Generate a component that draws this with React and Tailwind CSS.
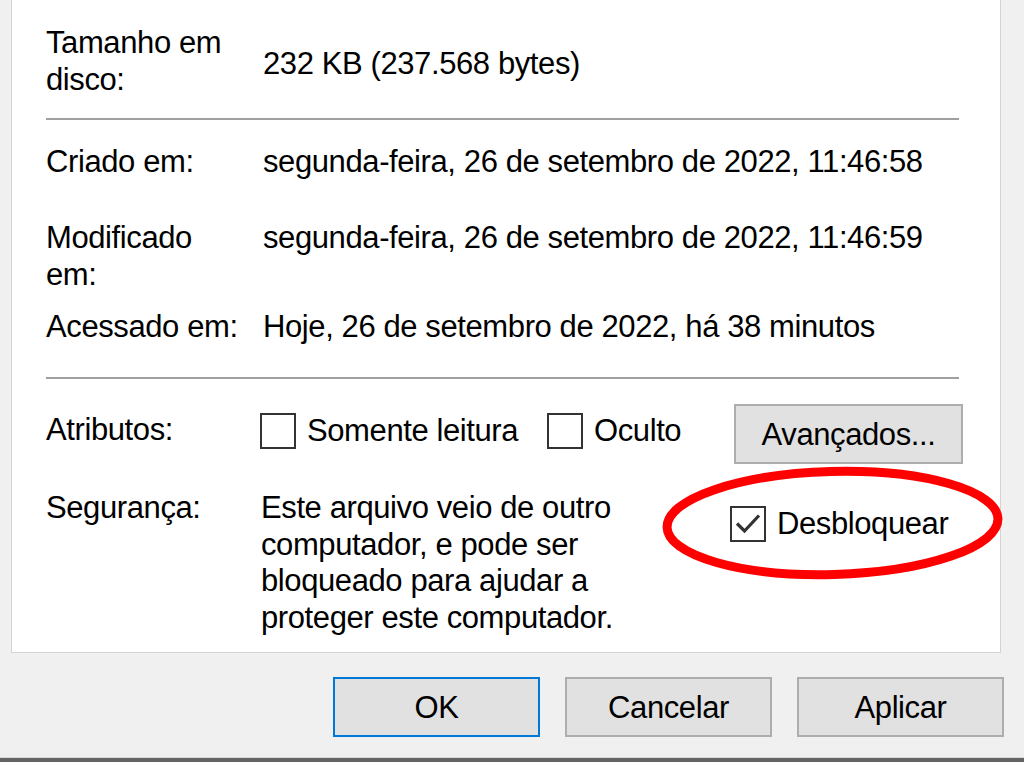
import React from "react";

function Box({ checked }) {
  return (
    <div className="w-[36px] h-[36px] border-2 border-[#333333] bg-white shrink-0 flex items-center justify-center">
      {checked && (
        <svg width="30" height="30" viewBox="0 0 30 30">
          <path d="M4 14.5 L11.5 22 L26 6.5" fill="none" stroke="#333333" strokeWidth="3.2" strokeLinejoin="miter" />
        </svg>
      )}
    </div>
  );
}

function Btn({ children, primary, className = "" }) {
  return (
    <div
      className={
        "h-[60px] flex items-center justify-center bg-[#e1e1e1] border-2 " +
        (primary ? "border-[#0078d7]" : "border-[#adadad]") +
        " " +
        className
      }
    >
      {children}
    </div>
  );
}

export default function App() {
  return (
    <div
      className="relative w-[1024px] h-[762px] overflow-hidden bg-[#f0f0f0] flex flex-col text-black text-[31px] leading-[37px] tracking-[-0.4px]"
      style={{ fontFamily: '"Liberation Sans", Arial, sans-serif' }}
    >
      {/* Panel */}
      <div className="ml-[11px] w-[990px] h-[653px] shrink-0 bg-white border-x border-b border-[#d4d4d4] pl-[34px] pr-[37px] pt-[24px]">
        <div className="flex h-[74px]">
          <div className="w-[217px] shrink-0">
            Tamanho em
            <br />
            disco:
          </div>
          <div className="mt-[21px]">232 KB (237.568 bytes)</div>
        </div>

        <div className="mt-[20px] h-[2px] w-[913px] bg-[#a0a0a0]" />

        <div className="mt-[23px] flex h-[37px]">
          <div className="w-[217px] shrink-0">Criado em:</div>
          <div>segunda-feira, 26 de setembro de 2022, 11:46:58</div>
        </div>

        <div className="mt-[39px] flex h-[74px]">
          <div className="w-[217px] shrink-0">
            Modificado
            <br />
            em:
          </div>
          <div>segunda-feira, 26 de setembro de 2022, 11:46:59</div>
        </div>

        <div className="mt-[15px] flex h-[37px]">
          <div className="w-[217px] shrink-0 whitespace-nowrap">Acessado em:</div>
          <div className="whitespace-nowrap">Hoje, 26 de setembro de 2022, há 38 minutos</div>
        </div>

        <div className="mt-[32px] h-[2px] w-[913px] bg-[#a0a0a0]" />

        <div className="mt-[25px] flex items-start h-[57px]">
          <div className="w-[214px] shrink-0 mt-[7px]">Atributos:</div>
          <div className="w-[287px] shrink-0 mt-[8px] flex items-center gap-[11px]">
            <Box />
            <span className="whitespace-nowrap">Somente leitura</span>
          </div>
          <div className="mt-[8px] flex items-center gap-[11px]">
            <Box />
            <span>Oculto</span>
          </div>
          <Btn className="ml-auto w-[229px] h-[57px]">Avançados...</Btn>
        </div>

        <div className="mt-[29px] flex items-start leading-[36.5px]">
          <div className="w-[215px] shrink-0">Segurança:</div>
          <div className="w-[469px] shrink-0 whitespace-nowrap">
            Este arquivo veio de outro
            <br />
            computador, e pode ser
            <br />
            bloqueado para ajudar a
            <br />
            proteger este computador.
          </div>
          <div className="mt-[16px] flex items-center gap-[11px]">
            <Box checked />
            <span>Desbloquear</span>
          </div>
        </div>
      </div>

      {/* Buttons */}
      <div className="mt-[24px] flex justify-end gap-[25px] pr-[20px]">
        <Btn primary className="w-[207px]">OK</Btn>
        <Btn className="w-[207px]">Cancelar</Btn>
        <Btn className="w-[207px]">Aplicar</Btn>
      </div>

      <div className="mt-auto h-[1px] bg-[#d8d8d8]" />
      <div className="h-[4px] bg-[#636363]" />

      {/* Red annotation ellipse */}
      <svg
        className="absolute left-0 top-0 pointer-events-none"
        width="1024"
        height="762"
        viewBox="0 0 1024 762"
      >
        <ellipse
          cx="832.5"
          cy="523"
          rx="165.5"
          ry="51.5"
          fill="none"
          stroke="#ff0000"
          strokeWidth="9"
          transform="rotate(-1.5 832.5 523)"
        />
      </svg>
    </div>
  );
}
